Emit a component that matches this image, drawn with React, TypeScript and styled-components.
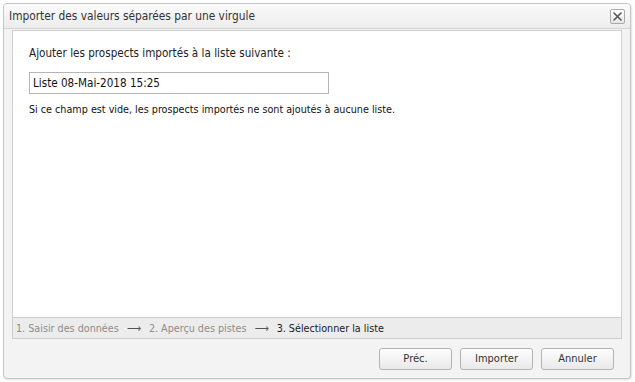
import React from "react";
import styled, { createGlobalStyle } from "styled-components";

const FONT = `"DejaVu Sans Condensed", "DejaVu Sans", Verdana, sans-serif`;

const Global = createGlobalStyle`
  html, body { margin: 0; padding: 0; background: #ffffff; }
  body { font-family: ${FONT}; }
  * { box-sizing: border-box; }
`;

const Page = styled.div`
  width: 635px;
  height: 382px;
  padding: 3px 4px 3px 3px;
`;

const Window = styled.div`
  width: 628px;
  height: 376px;
  border: 1px solid #c6c6c6;
  border-radius: 4px;
  background: #f3f3f3;
  display: flex;
  flex-direction: column;
  box-shadow: 1px 1px 2px rgba(0, 0, 0, 0.12);
`;

const TitleBar = styled.div`
  height: 25px;
  flex: none;
  display: flex;
  align-items: center;
  justify-content: space-between;
  padding: 0 5px 0 5px;
  background: linear-gradient(#fbfbfb, #ececec);
  border-bottom: 1px solid #d4d4d4;
  border-radius: 4px 4px 0 0;
`;

const Title = styled.span`
  font-size: 11.8px;
  color: #333333;
`;

const CloseButton = styled.button`
  width: 15px;
  height: 15px;
  padding: 0;
  border: 1px solid #a9a9a9;
  border-radius: 2px;
  background: linear-gradient(#ffffff, #e6e6e6);
  display: flex;
  align-items: center;
  justify-content: center;
`;

const Body = styled.div`
  flex: 1;
  display: flex;
  flex-direction: column;
  padding: 1px 8px 0 8px;
`;

const Panel = styled.div`
  flex: 1;
  background: #ffffff;
  border: 1px solid #cfcfcf;
  border-bottom: none;
  padding: 14px 16px 0 16px;
  display: flex;
  flex-direction: column;
`;

const Label = styled.div`
  font-size: 11.6px;
  color: #222222;
  line-height: 16px;
`;

const TextInput = styled.input`
  margin-top: 11px;
  width: 300px;
  height: 22px;
  border: 1px solid #b5b5b5;
  padding: 0 3px;
  font-family: ${FONT};
  font-size: 11.6px;
  color: #111111;
  outline: none;
`;

const Hint = styled.div`
  margin-top: 9px;
  font-size: 10.7px;
  color: #111111;
  line-height: 14px;
`;

const Steps = styled.div`
  height: 22px;
  flex: none;
  display: flex;
  align-items: center;
  gap: 8px;
  padding: 0 3px;
  background: #ececec;
  border: 1px solid #cfcfcf;
  font-size: 10.7px;
`;

const Step = styled.span<{ $active?: boolean }>`
  color: ${(p) => (p.$active ? "#1a1a1a" : "#8c8c8c")};
`;

const Arrow = styled.span`
  color: #555555;
  font-size: 11px;
`;

const Footer = styled.div`
  height: 39px;
  flex: none;
  display: flex;
  justify-content: flex-end;
  align-items: center;
  gap: 8px;
  padding: 0 16px 0 0;
`;

const Button = styled.button`
  width: 73px;
  height: 22px;
  border: 1px solid #b4b4b4;
  border-radius: 3px;
  background: linear-gradient(#fdfdfd, #e9e9e9);
  font-family: ${FONT};
  font-size: 11px;
  color: #333333;
  padding: 0;
`;

export default function App() {
  return (
    <Page>
      <Global />
      <Window>
        <TitleBar>
          <Title>Importer des valeurs séparées par une virgule</Title>
          <CloseButton aria-label="Fermer">
            <svg width="11" height="11" viewBox="0 0 11 11">
              <path d="M2 2 L9 9 M9 2 L2 9" stroke="#555" strokeWidth="1.6" strokeLinecap="round" />
            </svg>
          </CloseButton>
        </TitleBar>
        <Body>
          <Panel>
            <Label>Ajouter les prospects importés à la liste suivante :</Label>
            <TextInput defaultValue="Liste 08-Mai-2018 15:25" />
            <Hint>Si ce champ est vide, les prospects importés ne sont ajoutés à aucune liste.</Hint>
          </Panel>
          <Steps>
            <Step>1. Saisir des données</Step>
            <Arrow>⟶</Arrow>
            <Step>2. Aperçu des pistes</Step>
            <Arrow>⟶</Arrow>
            <Step $active>3. Sélectionner la liste</Step>
          </Steps>
        </Body>
        <Footer>
          <Button>Préc.</Button>
          <Button>Importer</Button>
          <Button>Annuler</Button>
        </Footer>
      </Window>
    </Page>
  );
}
